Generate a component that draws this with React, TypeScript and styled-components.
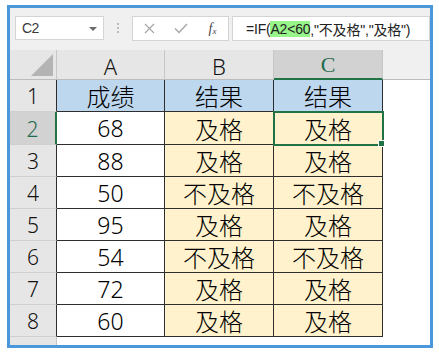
import React from "react";
import styled, { createGlobalStyle, css } from "styled-components";

const GlobalStyle = createGlobalStyle`
  html, body {
    margin: 0;
    padding: 0;
    background: #ffffff;
  }
  body {
    font-family: "Liberation Sans", "Noto Sans CJK SC", sans-serif;
  }
`;

const GREEN = "#217346";
const CJK = `"Liberation Sans", "Noto Sans CJK SC", sans-serif`;
const THIN = `"Noto Sans", "Noto Sans CJK SC", sans-serif`;

type Kind = "corner" | "colHead" | "rowHead" | "title" | "num" | "result" | "blank" | "spare";

const rows = [
  { score: "68", result: "及格" },
  { score: "88", result: "及格" },
  { score: "50", result: "不及格" },
  { score: "95", result: "及格" },
  { score: "54", result: "不及格" },
  { score: "72", result: "及格" },
  { score: "60", result: "及格" },
];

export default function App() {
  return (
    <>
      <GlobalStyle />
      <Frame>
        <Toolbar>
          <NameBox>
            <span>C2</span>
            <DropArrow />
          </NameBox>
          <Grip>
            <i />
            <i />
            <i />
          </Grip>
          <FxBox>
            <FxIcon>
              <svg width="11" height="11" viewBox="0 0 11 11">
                <path d="M1 1 L10 10 M10 1 L1 10" stroke="#a6a6a6" strokeWidth="1.2" fill="none" />
              </svg>
            </FxIcon>
            <FxIcon>
              <svg width="14" height="11" viewBox="0 0 14 11">
                <path d="M1 5.5 L5 9.5 L13 1" stroke="#a6a6a6" strokeWidth="1.4" fill="none" />
              </svg>
            </FxIcon>
            <FxLabel>
              f<sub>x</sub>
            </FxLabel>
          </FxBox>
          <FormulaInput>
            =IF(<Mark>A2&lt;60</Mark>,"不及格","及格")
          </FormulaInput>
        </Toolbar>

        <Sheet>
          <Cell kind="corner">
            <CornerMark />
          </Cell>
          <Cell kind="colHead">A</Cell>
          <Cell kind="colHead">B</Cell>
          <Cell kind="colHead" active>
            C
          </Cell>
          <Cell kind="spare" />

          <Cell kind="rowHead">1</Cell>
          <Cell kind="title">成绩</Cell>
          <Cell kind="title">结果</Cell>
          <Cell kind="title">结果</Cell>
          <Cell kind="blank" />

          {rows.map((r, i) => (
            <React.Fragment key={i}>
              <Cell kind="rowHead" active={i === 0}>
                {i + 2}
              </Cell>
              <Cell kind="num">{r.score}</Cell>
              <Cell kind="result">{r.result}</Cell>
              <Cell kind="result" selected={i === 0}>
                {r.result}
                {i === 0 && <FillHandle />}
              </Cell>
              <Cell kind="blank" />
            </React.Fragment>
          ))}

          <Cell kind="rowHead" last />
          <Cell kind="blank" />
          <Cell kind="blank" />
          <Cell kind="blank" />
          <Cell kind="blank" />
        </Sheet>
      </Frame>
    </>
  );
}

const Frame = styled.div`
  margin: 5px 0 0 7px;
  width: 420px;
  height: 337px;
  border: 3px solid #4a98da;
  background: #f0f0f0;
  display: flex;
  flex-direction: column;
  overflow: hidden;
`;

const Toolbar = styled.div`
  height: 42px;
  flex: none;
  display: flex;
  align-items: flex-start;
  padding: 8px 0 0 5px;
  box-sizing: border-box;
`;

const NameBox = styled.div`
  width: 89px;
  height: 24px;
  box-sizing: border-box;
  background: #ffffff;
  border: 1px solid #d4d4d4;
  display: flex;
  align-items: center;
  justify-content: space-between;
  padding: 0 6px 0 6px;
  font-size: 14px;
  color: #3a3a3a;
  letter-spacing: -0.5px;
`;

const DropArrow = styled.span`
  width: 0;
  height: 0;
  border-left: 4px solid transparent;
  border-right: 4px solid transparent;
  border-top: 4px solid #6a6a6a;
  margin-top: 1px;
`;

const Grip = styled.div`
  width: 28px;
  height: 24px;
  display: flex;
  flex-direction: column;
  align-items: center;
  justify-content: center;
  gap: 2px;
  & > i {
    display: block;
    width: 2px;
    height: 2px;
    background: #bdbdbd;
  }
`;

const FxBox = styled.div`
  width: 97px;
  height: 25px;
  box-sizing: border-box;
  background: #ffffff;
  border: 1px solid #d4d4d4;
  display: flex;
  align-items: center;
  padding: 0;
`;

const FxIcon = styled.span`
  width: 32px;
  display: flex;
  justify-content: center;
  align-items: center;
`;

const FxLabel = styled.span`
  flex: 1;
  text-align: center;
  font-family: "Liberation Serif", serif;
  font-style: italic;
  font-size: 14px;
  color: #4a4a4a;
  sub {
    font-size: 9px;
    vertical-align: -1px;
  }
`;

const FormulaInput = styled.div`
  margin-left: 3px;
  width: 198px;
  height: 25px;
  box-sizing: border-box;
  background: #ffffff;
  border: 1px solid #d4d4d4;
  padding: 0 0 0 13px;
  display: flex;
  align-items: center;
  white-space: nowrap;
  font-family: ${CJK};
  font-size: 14px;
  color: #222222;
  letter-spacing: -0.2px;
`;

const Mark = styled.span`
  background: #98f58a;
`;

const Sheet = styled.div`
  flex: 1;
  display: grid;
  grid-template-columns: 47px 108px 109px 109px 1fr;
  grid-template-rows: 30px 32px 33px 32px 32px 32px 32px 32px 32px 1fr;
`;

const Cell = styled.div<{ kind: Kind; active?: boolean; selected?: boolean; last?: boolean }>`
  position: relative;
  box-sizing: border-box;
  display: flex;
  align-items: center;
  justify-content: center;
  font-family: ${THIN};
  font-weight: 300;
  color: #000000;
  border-right: 1px solid #2e2e2e;
  border-bottom: 1px solid #2e2e2e;
  white-space: nowrap;

  ${(p) =>
    (p.kind === "corner" || p.kind === "colHead" || p.kind === "spare") &&
    css`
      background: #e6e6e6;
      border-right: 1px solid #c6c6c6;
      border-bottom: 1px solid #bcbcbc;
      font-size: 22px;
      color: #111111;
      padding-top: 2px;
    `}

  ${(p) =>
    p.kind === "spare" &&
    css`
      background: #f0f0f0;
      border-right: none;
    `}

  ${(p) =>
    p.kind === "colHead" &&
    p.active &&
    css`
      background: #d2d2d2;
      border-bottom: 2px solid ${GREEN};
      font-family: "Liberation Serif", serif;
      font-weight: 400;
      color: #1f6b4f;
      font-size: 22px;
    `}

  ${(p) =>
    p.kind === "corner" &&
    css`
      align-items: flex-end;
      justify-content: flex-end;
      padding: 0 3px 3px 0;
    `}

  ${(p) =>
    p.kind === "rowHead" &&
    css`
      background: #e6e6e6;
      border-bottom: 1px solid #d0d0d0;
      font-size: 21px;
      color: #111111;
      padding-top: 1px;
    `}

  ${(p) =>
    p.kind === "rowHead" &&
    p.last &&
    css`
      border-right: 1px solid #c6c6c6;
      border-bottom: none;
    `}

  ${(p) =>
    p.kind === "rowHead" &&
    p.active &&
    css`
      background: #d2d2d2;
      color: #1f6b4f;
      border-right: 2px solid ${GREEN};
    `}

  ${(p) =>
    p.kind === "title" &&
    css`
      background: #bdd7ee;
      font-size: 24px;
    `}

  ${(p) =>
    p.kind === "num" &&
    css`
      background: #ffffff;
      font-size: 23px;
    `}

  ${(p) =>
    p.kind === "result" &&
    css`
      background: #fff2cc;
      font-size: 24px;
    `}

  ${(p) =>
    p.kind === "blank" &&
    css`
      background: #ffffff;
      border-right: none;
      border-bottom: none;
    `}

  ${(p) =>
    p.selected &&
    css`
      outline: 2px solid ${GREEN};
      outline-offset: -1px;
      z-index: 1;
    `}
`;

const CornerMark = styled.span`
  width: 0;
  height: 0;
  border-left: 22px solid transparent;
  border-bottom: 22px solid #b4b4b4;
`;

const FillHandle = styled.span`
  position: absolute;
  right: -3px;
  bottom: -3px;
  width: 5px;
  height: 5px;
  background: ${GREEN};
  border: 1px solid #ffffff;
`;
